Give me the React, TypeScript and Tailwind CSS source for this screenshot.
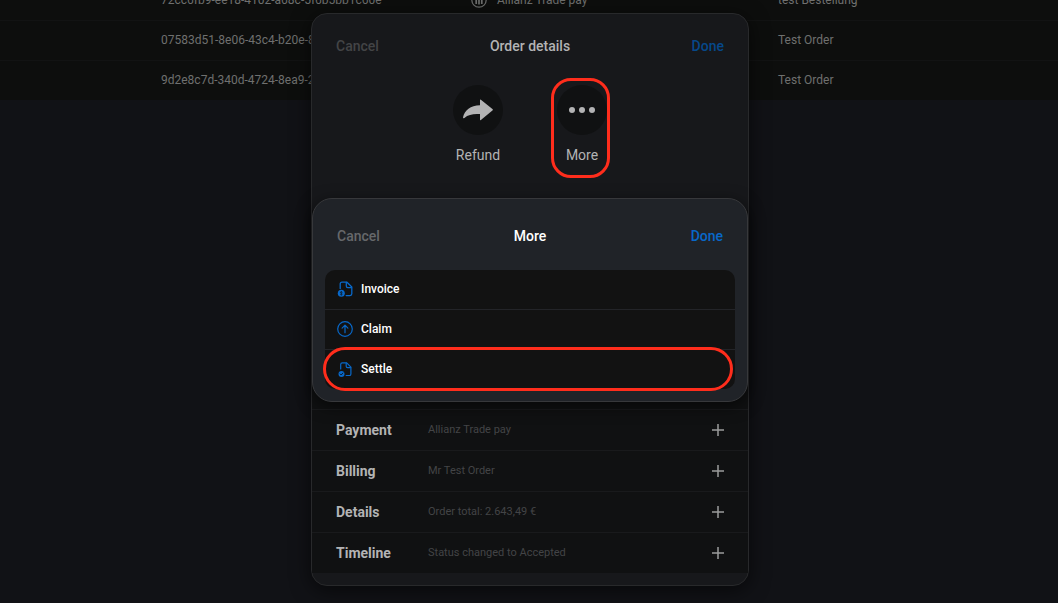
import type { ReactNode } from "react";

const orders = [
  { id: "72cc6fb9-ee18-4102-a68c-5f6b5bb1c60e", payment: "Allianz Trade pay", note: "test Bestellung" },
  { id: "07583d51-8e06-43c4-b20e-8f1c2a7d9e10", payment: "", note: "Test Order" },
  { id: "9d2e8c7d-340d-4724-8ea9-2b6f4c8a1d35", payment: "", note: "Test Order" },
];

const sections = [
  { title: "Payment", summary: "Allianz Trade pay" },
  { title: "Billing", summary: "Mr Test Order" },
  { title: "Details", summary: "Order total: 2.643,49 €" },
  { title: "Timeline", summary: "Status changed to Accepted" },
];

function AllianzIcon() {
  return (
    <svg viewBox="0 0 16 16" className="size-4 shrink-0" fill="none" stroke="currentColor" aria-hidden="true">
      <circle cx="8" cy="8" r="7.2" strokeWidth="1.2" />
      <path d="M5.2 12V7.5M8 12.5V4M10.8 12V7.5M6.8 4.2H8" strokeWidth="1.7" />
    </svg>
  );
}

function ShareIcon() {
  return (
    <svg viewBox="0 0 30 22" className="h-[22px] w-[30px]" fill="currentColor" aria-hidden="true">
      <path d="M17 1.2Q17 .1 17.9.8L29.4 10Q30.3 10.7 29.4 11.5L17.9 21Q17 21.700 17 20.600V15.100C10.500 14.600 5.500 15.500 1.400 18.900Q-.2 19.900.1 18C1.500 11.500 7.500 6.200 17 6.200Z" />
    </svg>
  );
}

function DotsIcon() {
  return (
    <svg viewBox="0 0 26 6" className="h-[6px] w-[26px]" fill="currentColor" aria-hidden="true">
      <circle cx="3" cy="3" r="3" />
      <circle cx="13" cy="3" r="3" />
      <circle cx="23" cy="3" r="3" />
    </svg>
  );
}

function InvoiceIcon() {
  return (
    <svg viewBox="0 0 16 16" className="size-4" fill="none" stroke="currentColor" strokeWidth="1.3" strokeLinejoin="round" strokeLinecap="round" aria-hidden="true">
      <path d="M3.200 7.500V3Q3.200 1.200 5 1.200H10L14.800 6V12.800Q14.800 14.600 13 14.600H9.200" />
      <path d="M9.300 1.500V5Q9.300 6.600 10.800 6.600H14.500" />
      <circle cx="4.300" cy="12.300" r="3.500" fill="currentColor" stroke="none" />
      <path d="M5.300 11.200C4.700 10.500 3.400 10.700 3.400 11.500S5.300 12.300 5.300 13.100 3.900 14 3.300 13.300M4.300 10.400V14.200" stroke="#121212" strokeWidth=".6" />
    </svg>
  );
}

function ClaimIcon() {
  return (
    <svg viewBox="0 0 16 16" className="size-4" fill="none" stroke="currentColor" strokeWidth="1.200" strokeLinejoin="round" strokeLinecap="round" aria-hidden="true">
      <circle cx="8" cy="8" r="7.300" />
      <path d="M8 11.700V4.400M5.100 7.100L8 4.200L10.900 7.100" />
    </svg>
  );
}

function SettleIcon() {
  return (
    <svg viewBox="0 0 16 16" className="size-4" fill="none" stroke="currentColor" strokeWidth="1.200" strokeLinejoin="round" strokeLinecap="round" aria-hidden="true">
      <path d="M3.700 8V3.500Q3.700 1.900 5.300 1.900H9.700L13.900 6.100V12.900Q13.900 14.500 12.300 14.500H9.200" />
      <path d="M9.200 2.200V5.200Q9.200 6.600 10.600 6.600H13.600" />
      <circle cx="4.500" cy="13" r="3" fill="currentColor" stroke="none" />
      <path d="M3.200 13L4.200 14L5.900 12" stroke="#121212" strokeWidth=".9" />
    </svg>
  );
}

function PlusIcon() {
  return (
    <svg viewBox="0 0 12 12" className="size-3" fill="none" stroke="currentColor" strokeWidth="1.500" aria-hidden="true">
      <path d="M6 0V12M0 6H12" />
    </svg>
  );
}

const actions: { label: string; icon: ReactNode }[] = [
  { label: "Invoice", icon: <InvoiceIcon /> },
  { label: "Claim", icon: <ClaimIcon /> },
  { label: "Settle", icon: <SettleIcon /> },
];

function MoreDialog() {
  return (
    <section
      aria-label="More"
      className="absolute inset-x-0 top-1/2 -translate-y-1/2 rounded-[20px] border border-[#37383b] bg-[#202328] px-3 pb-3 shadow-[0_4px_16px_rgba(0,0,0,0.6)]"
    >
      <header className="grid h-[71px] grid-cols-3 items-center px-3 pt-1 text-sm font-medium">
        <button className="justify-self-start text-[#66686b]">Cancel</button>
        <h2 className="text-center text-white">More</h2>
        <button className="justify-self-end text-[#0868c9]">Done</button>
      </header>
      <div className="relative">
        <ul className="overflow-hidden rounded-[10px] bg-[#121212]">
          {actions.map((action) => (
            <li key={action.label} className="border-b border-[#232428] last:border-b-0">
              <button className="flex h-[39px] w-full items-center gap-2 px-3 text-left text-xs font-medium text-white">
                <span className="text-[#0868c9]">{action.icon}</span>
                {action.label}
              </button>
            </li>
          ))}
        </ul>
        <div className="pointer-events-none absolute -bottom-0.5 -left-0.5 right-0.5 h-11 rounded-[22px] border-3 border-[#ff2d1c]" />
      </div>
    </section>
  );
}

export default function App() {
  return (
    <div className="relative h-screen overflow-hidden bg-[#111216] font-['Roboto',sans-serif] text-[#6f706f]">
      <table className="-mt-5 w-full table-fixed border-collapse bg-[#0d0e0d] text-left text-xs">
        <colgroup>
          <col className="w-[471px]" />
          <col className="w-[307px]" />
          <col />
        </colgroup>
        <tbody>
          {orders.map((order) => (
            <tr key={order.id} className="h-10 border-b border-[#121313] last:border-b-0">
              <td className="pl-[161px] whitespace-nowrap">{order.id}</td>
              <td>
                {order.payment && (
                  <div className="flex items-center gap-[10px]">
                    <AllianzIcon />
                    {order.payment}
                  </div>
                )}
              </td>
              <td>{order.note}</td>
            </tr>
          ))}
        </tbody>
      </table>

      <div className="absolute inset-0 flex justify-center pt-[13px] pb-[17px] pl-0.5">
        <main className="relative flex w-full max-w-[438px] flex-col rounded-2xl border border-[#28292b] bg-[#17181b] pb-3 shadow-[0_4px_20px_rgba(0,0,0,0.6)]">
          <header className="grid h-16 grid-cols-3 items-center px-6 text-sm font-medium">
            <button className="justify-self-start text-[#434446]">Cancel</button>
            <h1 className="text-center text-[#b3b3b4]">Order details</h1>
            <button className="justify-self-end text-[#06488a]">Done</button>
          </header>

          <div className="flex justify-center text-sm text-[#b3b3b4]">
            <button className="flex h-[100px] w-[104px] flex-col items-center gap-[10px] pt-[7px]">
              <span className="flex size-[50px] items-center justify-center rounded-full bg-[#101112]">
                <ShareIcon />
              </span>
              Refund
            </button>
            <button className="relative flex h-[100px] w-[104px] flex-col items-center gap-[10px] pt-[7px]">
              <span className="flex size-[50px] items-center justify-center rounded-full bg-[#101112]">
                <DotsIcon />
              </span>
              More
              <span className="absolute inset-y-0 left-[21px] w-[59px] rounded-[20px] border-3 border-[#ff2d1c]" />
            </button>
          </div>

          <div className="mt-8 flex flex-1 flex-col justify-end bg-[#101112]">
            {sections.map((section) => (
              <button
                key={section.title}
                className="grid h-[41px] grid-cols-[92px_1fr_auto] items-center border-t border-[#191a1c] px-6 text-left"
              >
                <span className="text-sm font-bold text-[#b3b3b4]">{section.title}</span>
                <span className="text-[11px] text-[#434446]">{section.summary}</span>
                <span className="text-[#9b9c9c]">
                  <PlusIcon />
                </span>
              </button>
            ))}
          </div>

          <MoreDialog />
        </main>
      </div>
    </div>
  );
}
